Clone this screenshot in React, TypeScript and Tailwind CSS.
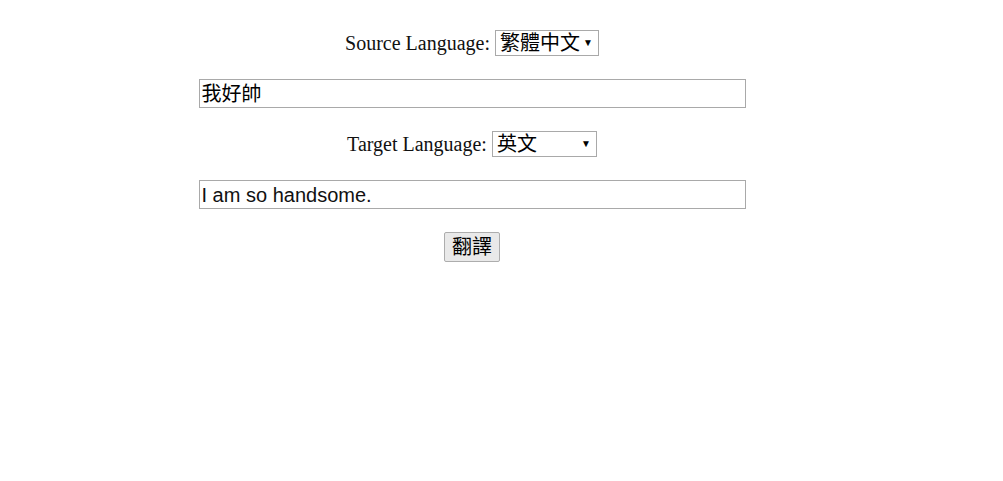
import React from "react";

function Select({ value, width }: { value: string; width: string }) {
  return (
    <div
      className={`relative h-[26px] ${width} border border-[#a9a9a9] bg-white flex items-center pl-[4px] text-[20px] leading-none text-black font-['Liberation_Sans','Noto_Sans_CJK_TC',sans-serif]`}
    >
      <span>{value}</span>
      <span className="absolute right-[5px] top-[7px] text-[10px] leading-none">▼</span>
    </div>
  );
}

export default function App() {
  return (
    <div className="w-[944px] h-[481px] bg-white flex flex-col items-center pt-[30px] gap-[23px]">
      <div className="flex items-center h-[26px]">
        <span className="text-[20px] text-[#111] mr-[5px] font-['Liberation_Serif',serif]">
          Source Language:
        </span>
        <Select value="繁體中文" width="w-[104px]" />
      </div>
      <input
        readOnly
        value="我好帥"
        className="w-[547px] h-[29px] border border-[#a9a9a9] px-[2px] text-[20px] text-black outline-none font-['Liberation_Sans','Noto_Sans_CJK_TC',sans-serif]"
      />
      <div className="flex items-center h-[26px]">
        <span className="text-[20px] text-[#111] mr-[5px] font-['Liberation_Serif',serif]">
          Target Language:
        </span>
        <Select value="英文" width="w-[105px]" />
      </div>
      <input
        readOnly
        value="I am so handsome."
        className="w-[547px] h-[29px] border border-[#a9a9a9] px-[2px] text-[20px] text-[#111] outline-none font-['Liberation_Sans','Noto_Sans_CJK_TC',sans-serif]"
      />
      <button className="w-[56px] h-[30px] border border-[#adadad] bg-[#e9e9e9] rounded-[2px] text-[20px] text-black leading-none font-['Liberation_Sans','Noto_Sans_CJK_TC',sans-serif]">
        翻譯
      </button>
    </div>
  );
}
